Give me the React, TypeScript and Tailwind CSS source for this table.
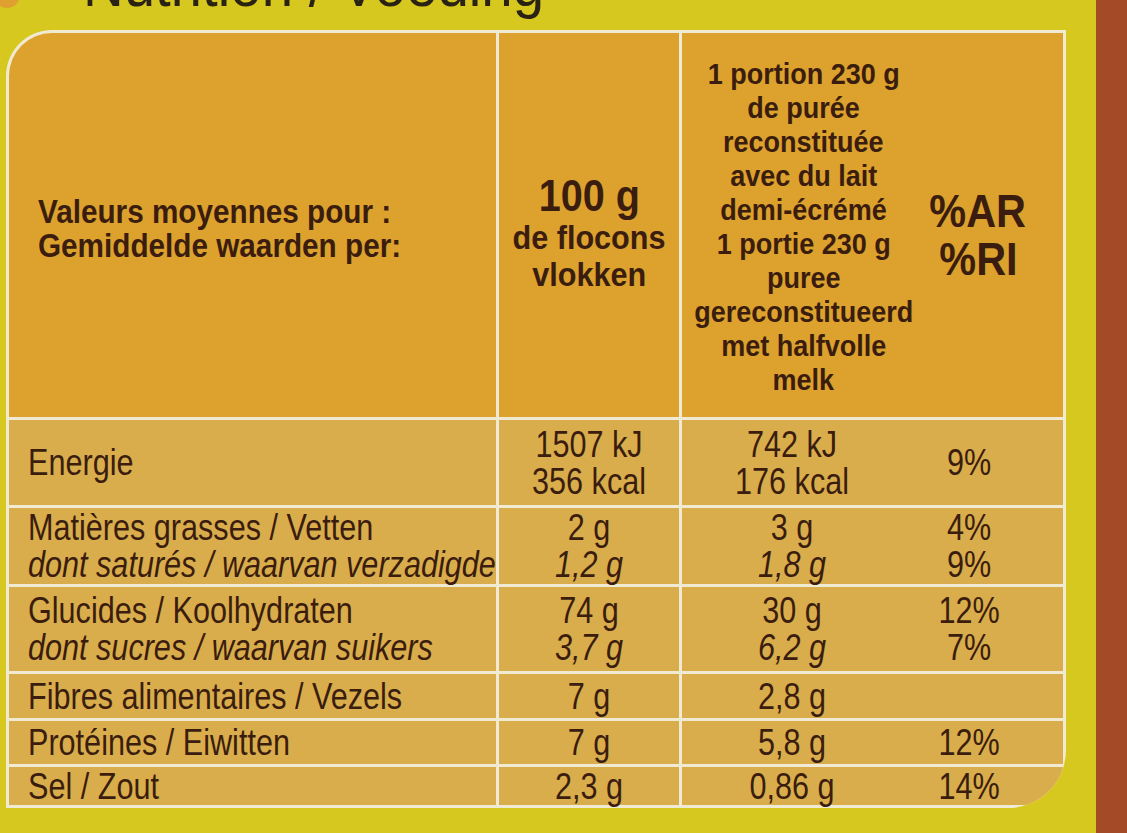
const rows = [
  {
    label: ['Energie'],
    italic: [false],
    per100: ['1507 kJ', '356 kcal'],
    portion: ['742 kJ', '176 kcal'],
    ri: ['9%'],
    h: 'h-[85px]',
  },
  {
    label: ['Matières grasses / Vetten', 'dont saturés / waarvan verzadigde'],
    italic: [false, true],
    per100: ['2 g', '1,2 g'],
    portion: ['3 g', '1,8 g'],
    ri: ['4%', '9%'],
    h: 'h-[76px]',
  },
  {
    label: ['Glucides / Koolhydraten', 'dont sucres / waarvan suikers'],
    italic: [false, true],
    per100: ['74 g', '3,7 g'],
    portion: ['30 g', '6,2 g'],
    ri: ['12%', '7%'],
    h: 'h-[84px]',
  },
  {
    label: ['Fibres alimentaires / Vezels'],
    italic: [false],
    per100: ['7 g'],
    portion: ['2,8 g'],
    ri: [''],
    h: 'h-[44px]',
  },
  {
    label: ['Protéines / Eiwitten'],
    italic: [false],
    per100: ['7 g'],
    portion: ['5,8 g'],
    ri: ['12%'],
    h: 'h-[43px]',
  },
  {
    label: ['Sel / Zout'],
    italic: [false],
    per100: ['2,3 g'],
    portion: ['0,86 g'],
    ri: ['14%'],
    h: 'h-[38px]',
  },
];

// condensed look: Liberation Sans squeezed horizontally (no narrow face installed)
function Lines({
  lines,
  italic,
  left,
  bold,
}: {
  lines: string[];
  italic?: boolean[];
  left?: boolean;
  bold?: boolean;
}) {
  return (
    <div className={`flex flex-col ${left ? 'items-start' : 'items-center'}`}>
      {lines.map((l, i) => (
        <span
          key={i}
          className={`inline-block whitespace-nowrap ${bold ? 'scale-x-[0.9]' : 'scale-x-[0.85]'} ${
            left ? 'origin-left' : 'origin-center'
          } ${italic && italic[i] ? 'italic' : ''}`}
        >
          {l}
        </span>
      ))}
    </div>
  );
}

export default function App() {
  return (
    <div className="w-[1127px] h-[833px] overflow-hidden bg-[#d6c81f] flex font-['Liberation_Sans',Arial,sans-serif] text-[#3b1d0f]">
      <div className="flex-1 flex flex-col">
        <div className="h-[30px] overflow-hidden relative">
          <div className="w-[26px] h-[26px] rounded-full bg-[#e0a030] -ml-[6px] -mt-[18px]" />
          <div className="absolute left-[83px] -top-[46px] text-[62px] leading-none text-[#2a2212] whitespace-nowrap scale-x-[0.91] origin-left">
            Nutrition / Voeding
          </div>
        </div>

        <div className="ml-[6px] w-[1060px] bg-[#f1ead2] p-[3px] rounded-tl-[46px] rounded-br-[58px] overflow-hidden flex flex-col gap-[3px]">
          {/* header */}
          <div className="grid grid-cols-[487px_180px_381px] gap-[3px] h-[384px] font-bold">
            <div className="bg-[#dca22d] rounded-tl-[43px] flex items-center pl-[29px] pt-[8px] text-[33px] leading-[34px]">
              <Lines bold left lines={['Valeurs moyennes pour :', 'Gemiddelde waarden per:']} />
            </div>
            <div className="bg-[#dca22d] flex flex-col items-center justify-center text-center text-[34px] leading-[37px] pt-[16px]">
              <span className="inline-block scale-x-[0.9] text-[44px] leading-[46px]">100 g</span>
              <span className="inline-block scale-x-[0.9]">de flocons</span>
              <span className="inline-block scale-x-[0.9]">vlokken</span>
            </div>
            <div className="bg-[#dca22d] grid grid-cols-[246px_100px] items-center">
              <div className="text-[30px] leading-[34px] pt-[4px] -ml-[3px]">
                <Lines
                  bold
                  lines={[
                    '1 portion 230 g',
                    'de purée',
                    'reconstituée',
                    'avec du lait',
                    'demi-écrémé',
                    '1 portie 230 g',
                    'puree',
                    'gereconstitueerd',
                    'met halfvolle',
                    'melk',
                  ]}
                />
              </div>
              <div className="text-[46px] leading-[48px] pt-[20px]">
                <Lines bold lines={['%AR', '%RI']} />
              </div>
            </div>
          </div>

          {rows.map((r, i) => (
            <div key={i} className={`grid grid-cols-[487px_180px_381px] gap-[3px] text-[36px] leading-[37px] ${r.h}`}>
              <div className="bg-[#d9ad4b] flex items-center pl-[19px]">
                <Lines left lines={r.label} italic={r.italic} />
              </div>
              <div className="bg-[#d9ad4b] flex items-center justify-center">
                <Lines lines={r.per100} italic={r.italic} />
              </div>
              <div
                className={`bg-[#d9ad4b] grid grid-cols-[220px_134px] items-center ${
                  i === rows.length - 1 ? 'rounded-br-[55px]' : ''
                }`}
              >
                <Lines lines={r.portion} italic={r.italic} />
                <Lines lines={r.ri} />
              </div>
            </div>
          ))}
        </div>
      </div>
      <div className="w-[31px] bg-[#a54a27]" />
    </div>
  );
}
